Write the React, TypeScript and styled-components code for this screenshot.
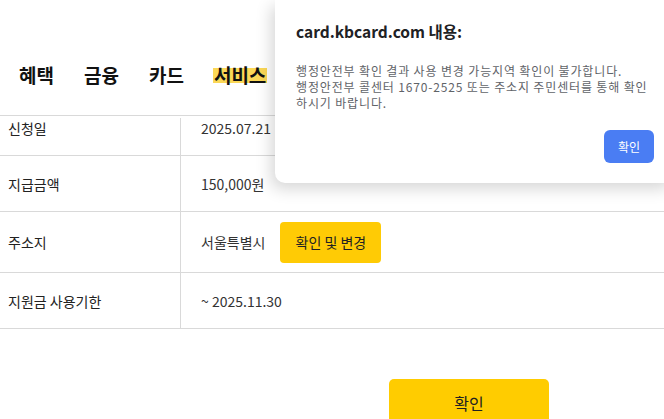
import styled, { createGlobalStyle } from "styled-components";

const GlobalStyle = createGlobalStyle`
  body {
    margin: 0;
    background: #fff;
    font-family: "Noto Sans CJK KR", "Noto Sans", sans-serif;
    color: #222;
  }
`;

const rows = [
  { label: "신청일", value: "2025.07.21", clipped: true },
  { label: "지급금액", value: "150,000원" },
  { label: "주소지", value: "서울특별시", action: "확인 및 변경" },
  { label: "지원금 사용기한", value: "~ 2025.11.30" },
];

const menu = ["혜택", "금융", "카드", "서비스"];

const alertLines = [
  "행정안전부 확인 결과 사용 변경 가능지역 확인이 불가합니다.",
  "행정안전부 콜센터 1670-2525 또는 주소지 주민센터를 통해 확인",
  "하시기 바랍니다.",
];

export default function App() {
  return (
    <>
      <GlobalStyle />
      <Page>
        <Header>
          {menu.map((m) => (
            <MenuItem key={m} active={m === "서비스"}>
              {m}
            </MenuItem>
          ))}
        </Header>
        <Table>
          {rows.map((r) => (
            <Row key={r.label} clipped={r.clipped} tall={!!r.action}>
              <Label>{r.label}</Label>
              <Value>
                {r.value}
                {r.action && <ChangeButton>{r.action}</ChangeButton>}
              </Value>
            </Row>
          ))}
        </Table>
        <Footer>
          <ConfirmButton>확인</ConfirmButton>
        </Footer>

        <Alert>
          <AlertTitle>card.kbcard.com 내용:</AlertTitle>
          <AlertBody>
            {alertLines.map((l) => (
              <AlertLine key={l}>{l}</AlertLine>
            ))}
          </AlertBody>
          <AlertActions>
            <AlertButton>확인</AlertButton>
          </AlertActions>
        </Alert>
      </Page>
    </>
  );
}

const Page = styled.div`
  position: relative;
  width: 664px;
  height: 419px;
  overflow: hidden;
`;

const Header = styled.div`
  height: 81px;
  padding: 34px 0 0 18px;
  display: flex;
  align-items: center;
  gap: 28px;
  border-bottom: 1px solid #d9d9d9;
`;

const MenuItem = styled.span<{ active?: boolean }>`
  font-size: 19px;
  font-weight: 700;
  line-height: 22px;
  color: #111;
  padding: 0 1px;
  background: ${({ active }) =>
    active ? "linear-gradient(transparent 16%, #fbd857 16%, #fbd857 88%, transparent 88%)" : "none"};
`;

const Table = styled.div`
  display: flex;
  flex-direction: column;
`;

const Row = styled.div<{ clipped?: boolean; tall?: boolean }>`
  display: grid;
  grid-template-columns: 181px 1fr;
  height: ${({ clipped, tall }) => (clipped ? 37 : tall ? 60 : 55)}px;
  align-items: ${({ clipped }) => (clipped ? "start" : "center")};
  padding-top: ${({ clipped }) => (clipped ? 2 : 0)}px;
  border-bottom: 1px solid #d9d9d9;
  box-sizing: content-box;
  font-size: 14px;
  line-height: 20px;
`;

const Label = styled.div`
  height: 100%;
  display: flex;
  align-items: inherit;
  padding-left: 8px;
  border-right: 1px solid #d9d9d9;
  color: #222;
`;

const Value = styled.div`
  display: flex;
  align-items: center;
  gap: 15px;
  padding-left: 20px;
  color: #333;
  white-space: nowrap;
`;

const ChangeButton = styled.button`
  width: 101px;
  height: 41px;
  border: none;
  border-radius: 4px;
  background: #ffcb05;
  font-family: inherit;
  font-size: 14px;
  color: #222;
`;

const Footer = styled.div`
  padding: 50px 0 0 389px;
`;

const ConfirmButton = styled.button`
  width: 160px;
  height: 48px;
  border: none;
  border-radius: 5px;
  background: #ffcc00;
  font-family: inherit;
  font-size: 16px;
  color: #222;
`;

const Alert = styled.div`
  position: absolute;
  top: 0;
  left: 275px;
  width: 400px;
  box-sizing: border-box;
  padding: 21px 21px 20px;
  background: #fff;
  border-radius: 0 0 10px 10px;
  box-shadow: -4px 6px 16px rgba(0, 0, 0, 0.16);
`;

const AlertTitle = styled.div`
  font-size: 15.5px;
  font-weight: 700;
  line-height: 20px;
  color: #202124;
`;

const AlertBody = styled.div`
  margin-top: 22px;
  display: flex;
  flex-direction: column;
`;

const AlertLine = styled.div`
  height: 16px;
  font-size: 12px;
  letter-spacing: 0.85px;
  line-height: 16px;
  color: #5f6368;
  white-space: nowrap;
`;

const AlertActions = styled.div`
  margin-top: 19px;
  display: flex;
  justify-content: flex-end;
`;

const AlertButton = styled.button`
  width: 50px;
  height: 33px;
  border: none;
  border-radius: 6px;
  background: #4a7df3;
  color: #fff;
  font-family: inherit;
  font-size: 12px;
`;
